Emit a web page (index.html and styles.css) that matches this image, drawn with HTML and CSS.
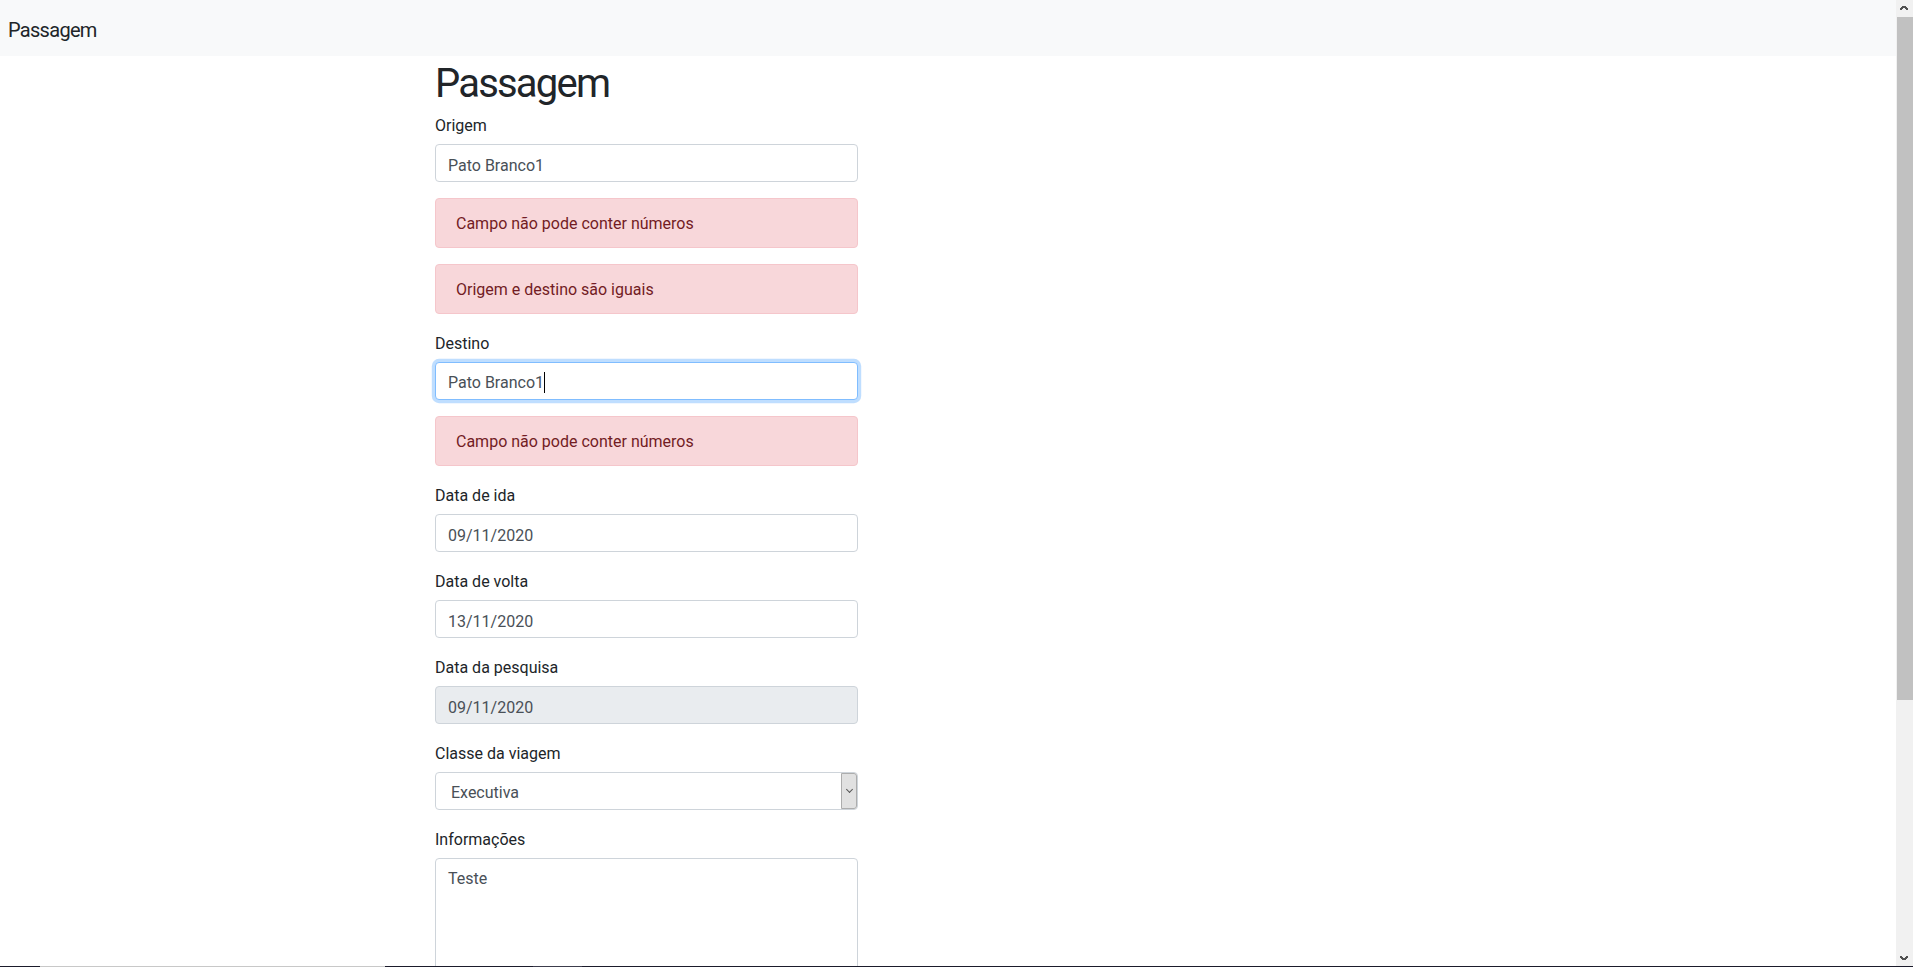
FILE: index.html
```html
<!DOCTYPE html>
<html lang="pt-br">
<head>
<meta charset="utf-8">
<title>Passagem</title>
<link rel="stylesheet" href="styles.css">
</head>
<body>
<div class="page">
  <nav class="navbar"><span class="brand">Passagem</span></nav>
  <main class="content">
    <h1 class="title">Passagem</h1>
    <form class="form">
      <div class="group">
        <label class="label">Origem</label>
        <input class="control" type="text" value="Pato Branco1">
      </div>
      <div class="alert">Campo não pode conter números</div>
      <div class="alert">Origem e destino são iguais</div>

      <div class="group">
        <label class="label">Destino</label>
        <div class="control focus" role="textbox">Pato Branco1<span class="caret"></span></div>
      </div>
      <div class="alert">Campo não pode conter números</div>

      <div class="group">
        <label class="label">Data de ida</label>
        <input class="control" type="text" value="09/11/2020">
      </div>

      <div class="group">
        <label class="label">Data de volta</label>
        <input class="control" type="text" value="13/11/2020">
      </div>

      <div class="group">
        <label class="label">Data da pesquisa</label>
        <input class="control disabled" type="text" value="09/11/2020" disabled>
      </div>

      <div class="group">
        <label class="label">Classe da viagem</label>
        <div class="select-wrap">
          <select class="control select">
            <option>Executiva</option>
            <option>Econômica</option>
          </select>
          <span class="select-btn"><span class="chev"></span></span>
        </div>
      </div>

      <div class="group">
        <label class="label">Informações</label>
        <textarea class="control area" rows="6">Teste</textarea>
      </div>
    </form>
  </main>
</div>
<div class="scrollbar">
  <div class="sb-btn up"></div>
  <div class="sb-track"><div class="sb-thumb"></div></div>
  <div class="sb-btn down"></div>
</div>
<div class="bottom-line"></div>
</body>
</html>
```

FILE: styles.css
```css
html, body {
  margin: 0;
  height: 100%;
  overflow: hidden;
}

body {
  display: flex;
  font-family: "Segoe UI", Roboto, "Noto Sans", sans-serif;
  font-size: 16px;
  line-height: 1.5;
  color: #212529;
  background: #fff;
}

.page {
  flex: 1;
  min-width: 0;
  overflow: hidden;
}

.navbar {
  display: flex;
  align-items: center;
  padding: 8px;
  background: #f8f9fa;
}

.brand {
  font-size: 20px;
  line-height: 30px;
  padding: 7px 0 3px;
  letter-spacing: -0.035em;
}

.content {
  width: 423px;
  margin-left: 435px;
  padding-bottom: 300px;
}

.title {
  font-size: 40px;
  font-weight: 400;
  line-height: 44px;
  margin: 0 0 8px;
  padding-top: 6px;
  height: 42px;
  letter-spacing: -0.045em;
}

.form {
  margin: 0;
}

.group {
  margin-bottom: 16px;
}

.label {
  display: inline-block;
  padding-top: 2px;
  margin-bottom: 6px;
}

.control {
  display: block;
  box-sizing: border-box;
  width: 100%;
  height: 38px;
  margin: 0;
  padding: 8px 12px 4px;
  font-family: inherit;
  font-size: 16px;
  line-height: 1.5;
  color: #495057;
  background: #fff;
  border: 1px solid #ced4da;
  border-radius: 4px;
  outline: none;
}

.control.focus {
  border-color: #80bdff;
  box-shadow: 0 0 0 3.2px rgba(0, 123, 255, 0.25);
  white-space: nowrap;
}

.caret {
  display: inline-block;
  width: 1px;
  height: 21px;
  background: #000;
  vertical-align: -5px;
}

.control.disabled {
  background: #e9ecef;
  opacity: 1;
}

.select-wrap {
  position: relative;
}

.select {
  -webkit-appearance: none;
  appearance: none;
  padding-left: 15px;
  padding-right: 24px;
}

.select-btn {
  position: absolute;
  top: 1px;
  right: 1px;
  bottom: 1px;
  width: 16px;
  box-sizing: border-box;
  background: #e1e1e1;
  border: 1px solid #adadad;
  border-radius: 0 3px 3px 0;
  display: flex;
  align-items: center;
  justify-content: center;
}

.chev {
  width: 4px;
  height: 4px;
  border-right: 1px solid #555;
  border-bottom: 1px solid #555;
  transform: translateY(-2px) rotate(45deg);
}

.area {
  height: 158px;
  resize: vertical;
}

.alert {
  padding: 13px 20px 11px;
  margin-bottom: 16px;
  color: #721c24;
  background: #f8d7da;
  border: 1px solid #f5c6cb;
  border-radius: 4px;
}

/* fake window scrollbar */
.scrollbar {
  width: 17px;
  flex: none;
  display: flex;
  flex-direction: column;
  background: #f1f1f1;
}

.sb-btn {
  height: 17px;
  flex: none;
  background-repeat: no-repeat;
}

.sb-btn.up {
  background-image:
    linear-gradient(to bottom right, transparent 35%, #505050 35%, #505050 65%, transparent 65%),
    linear-gradient(to top right, transparent 35%, #505050 35%, #505050 65%, transparent 65%);
  background-size: 4px 4px, 4px 4px;
  background-position: 4px 6px, 8px 6px;
  background-repeat: no-repeat;
}

.sb-btn.down {
  background-image:
    linear-gradient(to top right, transparent 35%, #505050 35%, #505050 65%, transparent 65%),
    linear-gradient(to bottom right, transparent 35%, #505050 35%, #505050 65%, transparent 65%);
  background-size: 4px 4px, 4px 4px;
  background-position: 4px 6px, 8px 6px;
  background-repeat: no-repeat;
}

.sb-track {
  flex: 1;
  padding-left: 1px;
}

.sb-thumb {
  height: 683px;
  background: #c1c1c1;
}

.bottom-line {
  position: fixed;
  left: 0;
  right: 0;
  bottom: 0;
  height: 1px;
  background: linear-gradient(to right,
    #1b1b2b 0, #1b1b2b 40px,
    #c8c8c8 40px, #c8c8c8 385px,
    #1b1b2b 385px, #1b1b2b 533px,
    #3c3c4c 533px, #3c3c4c 582px,
    #1b1b2b 582px);
}
```
